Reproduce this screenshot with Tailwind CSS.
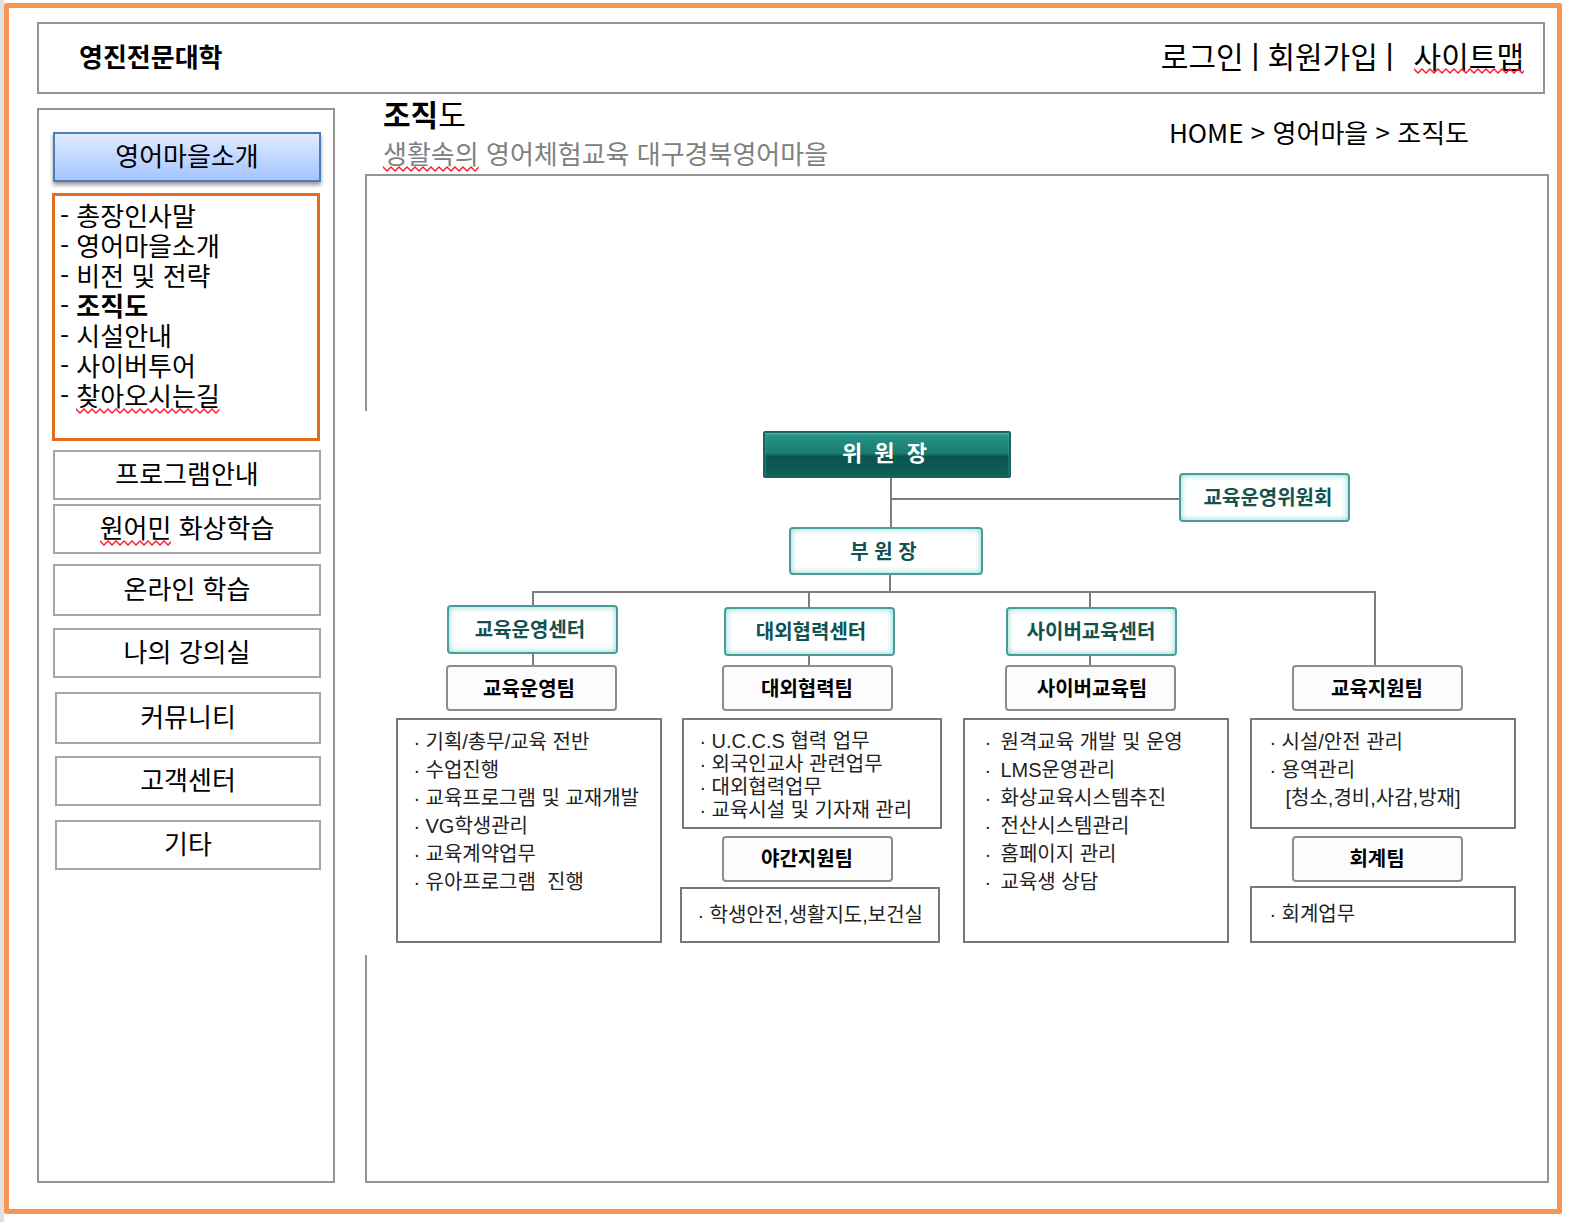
<!DOCTYPE html>
<html lang="ko">
<head>
<meta charset="utf-8">
<meta name="viewport" content="width=device-width, initial-scale=1">
<title>조직도 - 영어마을</title>
<script src="https://cdn.jsdelivr.net/npm/@tailwindcss/browser@4"></script>
</head>
<body class="flex min-h-screen min-w-[1540px] border-l-4 border-[#e0e0e0] bg-white font-['Noto_Sans_CJK_KR','Noto_Sans_CJK_SC',sans-serif] text-[26px] leading-[30px] text-black">

<!-- zigzag shared by the spelling marks -->
<svg class="absolute size-0" aria-hidden="true">
  <defs>
    <pattern id="zigzag" width="8" height="6" patternUnits="userSpaceOnUse">
      <path d="M-1 0L0 1L4 5L8 1L9 0" fill="none" stroke="#ff1d2d" stroke-width="1.5"/>
    </pattern>
  </defs>
</svg>

<div class="mt-[3px] mr-2 mb-2 flex flex-1 flex-col rounded-xs border-[5px] border-[#f79650] pt-[14px] pr-2 pb-[26px] pl-7">

  <header class="mr-1 flex h-[72px] items-center justify-between border-2 border-[#949494] pr-[19px] pb-1 pl-10">
    <a href="#" class="font-bold">영진전문대학</a>
    <nav class="flex items-center pb-0.5 text-[30px]">
      <a href="#">로그인</a>
      <span class="mx-2 font-['Liberation_Sans',sans-serif]">|</span>
      <a href="#">회원가입</a>
      <span class="mr-5 ml-2 font-['Liberation_Sans',sans-serif]">|</span>
      <a href="#" class="relative">사이트맵<svg class="absolute -bottom-1 left-0 h-1.5 w-full" aria-hidden="true"><rect width="100%" height="6" fill="url(#zigzag)"/></svg></a>
    </nav>
  </header>

  <div class="flex flex-1">
    <aside class="mt-[14px] w-[298px] shrink-0 border-2 border-[#949494] pt-[22px] pr-3 pl-[14px]">
      <nav class="flex flex-col">
        <button class="h-[50px] border-2 border-[#4a7ebb] bg-linear-to-b from-[#e2ebff] to-[#a3c4ff] pb-1 shadow-[0_3px_4px_rgba(0,0,0,0.4)]">영어마을소개</button>
        <ul class="mt-[11px] mr-px -ml-px h-[248px] border-[3px] border-[#e46c21] px-[5px] py-1">
          <li>- <a href="#">총장인사말</a></li>
          <li>- <a href="#">영어마을소개</a></li>
          <li>- <a href="#">비전 및 전략</a></li>
          <li>- <a href="#" class="font-bold">조직도</a></li>
          <li>- <a href="#">시설안내</a></li>
          <li>- <a href="#">사이버투어</a></li>
          <li>- <a href="#" class="relative inline-block">찾아오시는길<svg class="absolute -bottom-1 left-0 h-1.5 w-full" aria-hidden="true"><rect width="100%" height="6" fill="url(#zigzag)"/></svg></a></li>
        </ul>
        <button class="mt-[9px] h-[50px] border-2 border-[#a5a5a5] pb-1">프로그램안내</button>
        <button class="mt-1 h-[50px] border-2 border-[#a5a5a5] pb-1"><span class="relative inline-block">원어민<svg class="absolute -bottom-1 left-0 h-1.5 w-full" aria-hidden="true"><rect width="100%" height="6" fill="url(#zigzag)"/></svg></span> 화상학습</button>
        <button class="mt-[10px] h-[52px] border-2 border-[#a5a5a5] pb-1">온라인 학습</button>
        <button class="mt-3 h-[50px] border-2 border-[#a5a5a5] pb-1">나의 강의실</button>
        <button class="mt-[14px] ml-0.5 h-[52px] border-2 border-[#a5a5a5] pb-1">커뮤니티</button>
        <button class="mt-3 ml-0.5 h-[50px] border-2 border-[#a5a5a5] pb-1">고객센터</button>
        <button class="mt-[14px] ml-0.5 h-[50px] border-2 border-[#a5a5a5] pb-1">기타</button>
      </nav>
    </aside>

    <main class="ml-[30px] flex flex-1 flex-col">
      <div class="flex h-20 items-start justify-between pr-20 pl-[18px]">
        <div>
          <h1 class="text-[30px] leading-[38px]"><b>조직</b>도</h1>
          <p class="mt-1.5 text-[#808080]"><span class="relative inline-block">생활속의<svg class="absolute -bottom-1 left-0 h-1.5 w-full" aria-hidden="true"><rect width="100%" height="6" fill="url(#zigzag)"/></svg></span> 영어체험교육 대구경북영어마을</p>
        </div>
        <nav class="mt-[23px]" aria-label="현재 위치"><a href="#">HOME</a> &gt; <a href="#">영어마을</a> &gt; <a href="#">조직도</a></nav>
      </div>

      <section class="flex flex-1 flex-col justify-center border-2 border-[#949494] pt-2">
        <!-- organisation chart; its white ground covers the frame's left edge -->
        <figure class="relative -ml-0.5 bg-white">
          <div class="relative mx-auto h-[544px] w-[1121px] font-['Liberation_Sans','Noto_Sans_CJK_KR','Noto_Sans_CJK_SC',sans-serif] text-[20px] whitespace-nowrap text-[#222]">
            <svg class="absolute inset-0" width="1121" height="544" fill="none" stroke="#7d7d7d" stroke-width="2" aria-hidden="true">
              <path d="M495 66V118M495 88H784M494 162V181M137 196V181H979V256M413 181V198M694 181V198M137 240V256M413 240V256M694 240V256"/>
            </svg>

            <div class="absolute top-[20px] left-[367px] flex h-[47px] w-[248px] items-center justify-center rounded-xs border-2 border-[#17655e] bg-[linear-gradient(#27978a,#1a7a6d_48%,#0b5450_54%,#0d5f58)] pr-1 text-[22px] font-bold text-white shadow-[inset_0_1px_2px_#5fb8ac]">위&nbsp;&nbsp;원&nbsp;&nbsp;장</div>
            <div class="absolute top-[116px] left-[393px] flex h-12 w-[194px] items-center justify-center rounded-sm border-2 border-[#4a9c98] bg-white pt-0.5 pr-1 font-bold text-[#12524f] shadow-[inset_0_0_6px_#7fd6cf]">부 원 장</div>
            <div class="absolute top-[62px] left-[783px] flex h-[49px] w-[171px] items-center justify-center rounded-sm border-2 border-[#4a9c98] bg-white pt-0.5 pl-2 font-bold text-[#12524f] shadow-[inset_0_0_6px_#7fd6cf]">교육운영위원회</div>

            <div class="absolute top-[194px] left-[51px] flex h-[49px] w-[171px] items-center justify-center rounded-sm border-2 border-[#4a9c98] bg-white pt-0.5 pr-1 font-bold text-[#12524f] shadow-[inset_0_0_6px_#7fd6cf]">교육운영센터</div>
            <div class="absolute top-[196px] left-[328px] flex h-[49px] w-[171px] items-center justify-center rounded-sm border-2 border-[#4a9c98] bg-white pt-0.5 pl-1 font-bold text-[#12524f] shadow-[inset_0_0_6px_#7fd6cf]">대외협력센터</div>
            <div class="absolute top-[196px] left-[610px] flex h-[49px] w-[171px] items-center justify-center rounded-sm border-2 border-[#4a9c98] bg-white pt-0.5 font-bold text-[#12524f] shadow-[inset_0_0_6px_#7fd6cf]">사이버교육센터</div>

            <div class="absolute top-[254px] left-[50px] flex h-[46px] w-[171px] items-center justify-center rounded-sm border-2 border-[#8c8c8c] bg-[#fcfcfc] pt-0.5 pr-1 font-bold text-black">교육운영팀</div>
            <div class="absolute top-[254px] left-[326px] flex h-[46px] w-[171px] items-center justify-center rounded-sm border-2 border-[#8c8c8c] bg-[#fcfcfc] pt-0.5 font-bold text-black">대외협력팀</div>
            <div class="absolute top-[254px] left-[609px] flex h-[46px] w-[171px] items-center justify-center rounded-sm border-2 border-[#8c8c8c] bg-[#fcfcfc] pt-0.5 pl-1 font-bold text-black">사이버교육팀</div>
            <div class="absolute top-[254px] left-[896px] flex h-[46px] w-[171px] items-center justify-center rounded-sm border-2 border-[#8c8c8c] bg-[#fcfcfc] pt-0.5 font-bold text-black">교육지원팀</div>
            <div class="absolute top-[425px] left-[326px] flex h-[46px] w-[171px] items-center justify-center rounded-sm border-2 border-[#8c8c8c] bg-[#fcfcfc] font-bold text-black">야간지원팀</div>
            <div class="absolute top-[425px] left-[896px] flex h-[46px] w-[171px] items-center justify-center rounded-sm border-2 border-[#8c8c8c] bg-[#fcfcfc] font-bold text-black">회계팀</div>

            <ul class="absolute top-[307px] left-0 h-[225px] w-[266px] border-2 border-[#777] px-4 py-2 leading-7">
              <li class="flex"><span class="w-3">·</span>기획/총무/교육 전반</li>
              <li class="flex"><span class="w-3">·</span>수업진행</li>
              <li class="flex"><span class="w-3">·</span>교육프로그램 및 교재개발</li>
              <li class="flex"><span class="w-3">·</span>VG학생관리</li>
              <li class="flex"><span class="w-3">·</span>교육계약업무</li>
              <li class="flex"><span class="w-3">·</span>유아프로그램&nbsp; 진행</li>
            </ul>
            <ul class="absolute top-[307px] left-[286px] h-[111px] w-[260px] border-2 border-[#777] px-4 py-2.5 leading-[23px]">
              <li class="flex"><span class="w-3">·</span>U.C.C.S 협력 업무</li>
              <li class="flex"><span class="w-3">·</span>외국인교사 관련업무</li>
              <li class="flex"><span class="w-3">·</span>대외협력업무</li>
              <li class="flex"><span class="w-3">·</span>교육시설 및 기자재 관리</li>
            </ul>
            <ul class="absolute top-[476px] left-[284px] h-[56px] w-[260px] border-2 border-[#777] py-3 pl-4 leading-7">
              <li class="flex"><span class="w-3 shrink-0">·</span>학생안전,생활지도,보건실</li>
            </ul>
            <ul class="absolute top-[307px] left-[567px] h-[225px] w-[266px] border-2 border-[#777] px-5 py-2 leading-7">
              <li class="flex"><span class="w-4">·</span>원격교육 개발 및 운영</li>
              <li class="flex"><span class="w-4">·</span>LMS운영관리</li>
              <li class="flex"><span class="w-4">·</span>화상교육시스템추진</li>
              <li class="flex"><span class="w-4">·</span>전산시스템관리</li>
              <li class="flex"><span class="w-4">·</span>홈페이지 관리</li>
              <li class="flex"><span class="w-4">·</span>교육생 상담</li>
            </ul>
            <ul class="absolute top-[307px] left-[854px] h-[111px] w-[266px] border-2 border-[#777] px-[18px] py-2 leading-7">
              <li class="flex"><span class="w-3">·</span>시설/안전 관리</li>
              <li class="flex"><span class="w-3">·</span>용역관리</li>
              <li class="pl-4">[청소,경비,사감,방재]</li>
            </ul>
            <ul class="absolute top-[475px] left-[854px] h-[57px] w-[266px] border-2 border-[#777] px-[18px] py-3 leading-7">
              <li class="flex"><span class="w-3">·</span>회계업무</li>
            </ul>
          </div>
        </figure>
      </section>
    </main>
  </div>
</div>
</body>
</html>
